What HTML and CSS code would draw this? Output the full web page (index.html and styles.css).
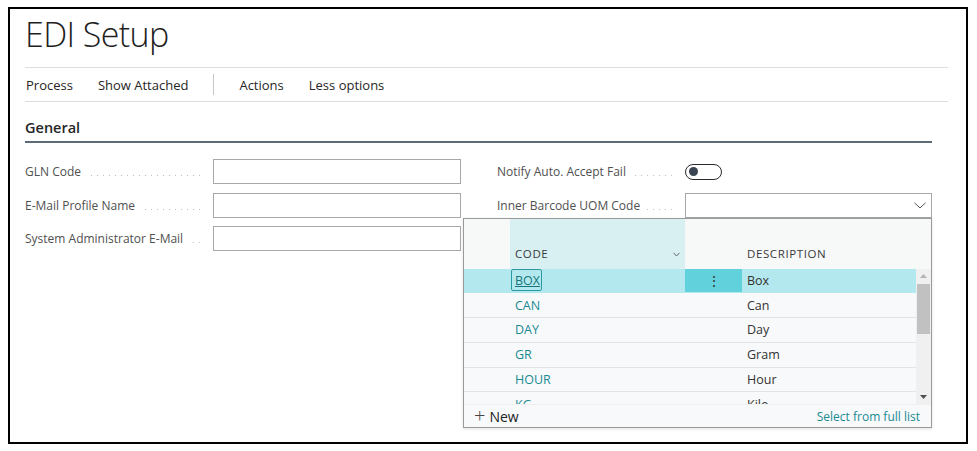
FILE: index.html
```html
<!DOCTYPE html>
<html lang="en">
<head>
<meta charset="utf-8">
<title>EDI Setup</title>
<link rel="stylesheet" href="styles.css">
</head>
<body>
<div class="frame">
  <div class="page">
    <h1 class="title">EDI Setup</h1>
    <nav class="toolbar">
      <span class="tb-item">Process</span>
      <span class="tb-item">Show Attached</span>
      <span class="tb-sep"></span>
      <span class="tb-item">Actions</span>
      <span class="tb-item">Less options</span>
    </nav>
    <section class="group">
      <h2 class="group-title">General</h2>
      <div class="fields">
        <div class="col">
          <div class="field">
            <span class="label"><span class="label-text">GLN Code</span><span class="leader"></span></span>
            <span class="input"></span>
          </div>
          <div class="field">
            <span class="label"><span class="label-text">E-Mail Profile Name</span><span class="leader"></span></span>
            <span class="input"></span>
          </div>
          <div class="field">
            <span class="label"><span class="label-text">System Administrator E-Mail</span><span class="leader"></span></span>
            <span class="input"></span>
          </div>
        </div>
        <div class="col">
          <div class="field">
            <span class="label"><span class="label-text">Notify Auto. Accept Fail</span><span class="leader"></span></span>
            <span class="control"><span class="toggle"><span class="knob"></span></span></span>
          </div>
          <div class="field">
            <span class="label"><span class="label-text">Inner Barcode UOM Code</span><span class="leader"></span></span>
            <span class="input combo">
              <svg class="chev" width="12" height="7" viewBox="0 0 12 7"><path d="M0.5 0.8 L6 6 L11.5 0.8" fill="none" stroke="#555" stroke-width="1"/></svg>
              <div class="popup">
                <div class="p-head">
                  <div class="c-lead"></div>
                  <div class="c-code hcode">CODE
                    <svg class="hchev" width="7" height="5" viewBox="0 0 7 5"><path d="M0.5 0.8 L3.5 4 L6.5 0.8" fill="none" stroke="#666" stroke-width="1"/></svg>
                  </div>
                  <div class="c-act"></div>
                  <div class="c-desc">DESCRIPTION</div>
                  <div class="c-scroll"></div>
                </div>
                <div class="p-body">
                  <div class="rows">
                    <div class="row sel">
                      <div class="c-lead"></div>
                      <div class="c-code"><span class="focus">BOX</span></div>
                      <div class="c-act">&#8942;</div>
                      <div class="c-desc">Box</div>
                    </div>
                    <div class="row">
                      <div class="c-lead"></div>
                      <div class="c-code">CAN</div>
                      <div class="c-act"></div>
                      <div class="c-desc">Can</div>
                    </div>
                    <div class="row">
                      <div class="c-lead"></div>
                      <div class="c-code">DAY</div>
                      <div class="c-act"></div>
                      <div class="c-desc">Day</div>
                    </div>
                    <div class="row">
                      <div class="c-lead"></div>
                      <div class="c-code">GR</div>
                      <div class="c-act"></div>
                      <div class="c-desc">Gram</div>
                    </div>
                    <div class="row">
                      <div class="c-lead"></div>
                      <div class="c-code">HOUR</div>
                      <div class="c-act"></div>
                      <div class="c-desc">Hour</div>
                    </div>
                    <div class="row">
                      <div class="c-lead"></div>
                      <div class="c-code">KG</div>
                      <div class="c-act"></div>
                      <div class="c-desc">Kilo</div>
                    </div>
                  </div>
                  <div class="scrollbar">
                    <svg class="arrow" width="15" height="14" viewBox="0 0 15 14"><path d="M4 9 L7.5 5 L11 9 Z" fill="#b5b5b5"/></svg>
                    <div class="thumb"></div>
                    <div class="track-gap"></div>
                    <svg class="arrow" width="15" height="14" viewBox="0 0 15 14"><path d="M4 5 L7.5 9 L11 5 Z" fill="#505050"/></svg>
                  </div>
                </div>
                <div class="p-foot">
                  <span class="new"><span class="plus">+</span>New</span>
                  <span class="full">Select from full list</span>
                </div>
              </div>
            </span>
          </div>
        </div>
      </div>
    </section>
  </div>
</div>
</body>
</html>
```

FILE: styles.css
```css
* { box-sizing: border-box; }
html, body { margin: 0; padding: 0; background: #fff; }
body {
  font-family: "Open Sans", "Noto Sans", "Liberation Sans", sans-serif;
  color: #212121;
  width: 977px;
  height: 451px;
  overflow: hidden;
}
.frame {
  margin: 7px 0 0 8px;
  width: 960px;
  height: 437px;
  border: 2px solid #000;
}
.page {
  padding: 0 18px 0 15px;
}
.title {
  margin: 0;
  font-weight: 300;
  font-size: 34px;
  line-height: 40px;
  padding: 5px 0 13px;
  color: #1e1e1e;
  border-bottom: 1px solid #dedede;
  letter-spacing: -0.6px;
}
.toolbar {
  display: flex;
  align-items: center;
  height: 34px;
  border-bottom: 1px solid #dedede;
  font-size: 13px;
  color: #262626;
}
.tb-item { margin-right: 24px; padding-left: 1px; }
.tb-sep {
  width: 1px;
  height: 21px;
  background: #c8c8c8;
  margin: 0 24px 0 1px;
}
.group { margin-right: 16px; }
.group-title {
  margin: 16px 0 0;
  font-size: 14.5px;
  font-weight: 600;
  line-height: 20px;
  padding-bottom: 3px;
  border-bottom: 2px solid #5e6a78;
  color: #262626;
}
.fields {
  display: grid;
  grid-template-columns: 436px 435px;
  column-gap: 36px;
  padding-top: 16px;
}
.col {
  display: flex;
  flex-direction: column;
  gap: 8.5px;
}
.field {
  display: flex;
  align-items: center;
  height: 25px;
}
.label {
  width: 188px;
  display: flex;
  align-items: baseline;
  font-size: 12px;
  color: #505050;
  padding-right: 8px;
}
.label-text { white-space: nowrap; }
.leader {
  flex: 1;
  height: 1px;
  margin-left: 6px;
  background-image: linear-gradient(to right, #bdbdbd 1px, transparent 1px);
  background-size: 6px 1px;
  background-repeat: repeat-x;
  background-position: right 0;
}
.input {
  flex: 1;
  height: 25px;
  border: 1px solid #a8a8a8;
  background: #fff;
}
.control { flex: 1; display: flex; align-items: center; }
.toggle {
  width: 37px;
  height: 16px;
  border: 1.5px solid #2b2b2b;
  border-radius: 8px;
  display: flex;
  align-items: center;
  padding-left: 3px;
}
.knob {
  width: 9px;
  height: 9px;
  border-radius: 50%;
  background: #3b4452;
}
.combo {
  position: relative;
  display: flex;
  align-items: center;
  justify-content: flex-end;
  padding-right: 5px;
}
.popup {
  position: absolute;
  left: -223px;
  top: 24px;
  width: 469px;
  height: 210px;
  border: 1px solid #9a9a9a;
  background: #f8f9fa;
  box-shadow: 0 1px 3px rgba(0,0,0,0.12);
  display: flex;
  flex-direction: column;
  z-index: 5;
  font-size: 12.5px;
}
.p-head {
  display: flex;
  height: 50px;
  background: #f7f8f8;
  font-size: 11.5px;
  letter-spacing: 0.6px;
  color: #3a3a3a;
  font-weight: 500;
}
.c-lead { width: 46px; flex: none; }
.c-code { width: 175px; flex: none; padding-left: 5px; }
.c-act { width: 57px; flex: none; }
.c-desc { width: 174px; flex: none; padding-left: 5px; }
.c-scroll { width: 15px; flex: none; }
.p-head > div {
  display: flex;
  align-items: flex-end;
  padding-bottom: 8px;
}
.p-head .hcode {
  background: #d8f0f2;
  justify-content: space-between;
  padding-right: 5px;
}
.hchev { margin-bottom: 4px; }
.p-body {
  display: flex;
  height: 135px;
  overflow: hidden;
}
.rows {
  width: 452px;
  overflow: hidden;
}
.row {
  display: flex;
  height: 24.75px;
  align-items: center;
  border-bottom: 1px solid #e1e3e5;
}
.row .c-code { color: #1a8a92; }
.row .c-desc { color: #333; }
.row.sel { background: #b3e9ee; border-bottom-color: #b3e9ee; }
.row.sel .c-act {
  background: #61d2db;
  height: 100%;
  display: flex;
  align-items: center;
  justify-content: center;
  color: #333;
  font-size: 14px;
}
.row.sel .c-code { height: 100%; display: flex; align-items: center; padding-left: 1px; }
.focus {
  border: 1.5px solid #2a9aa0;
  border-radius: 2px;
  padding: 2px 1px 1px 3px;
  text-decoration: underline;
  color: #16747b;
  line-height: 17px;
}
.scrollbar {
  width: 15px;
  background: #f0f0f0;
  display: flex;
  flex-direction: column;
}
.arrow { display: block; flex: none; }
.thumb {
  margin: 1px 1px 0;
  height: 50px;
  background: #c1c1c1;
}
.track-gap { flex: 1; }
.p-foot {
  flex: 1;
  display: flex;
  align-items: center;
  justify-content: space-between;
  padding: 1px 11px 0 10px;
  border-top: 1px solid #f0f0f0;
}
.new { font-size: 14px; color: #222; display: flex; align-items: center; }
.plus { font-size: 20px; font-weight: 300; margin-right: 4px; line-height: 14px; color: #444; }
.full { color: #1a8a92; font-size: 12px; }
```
